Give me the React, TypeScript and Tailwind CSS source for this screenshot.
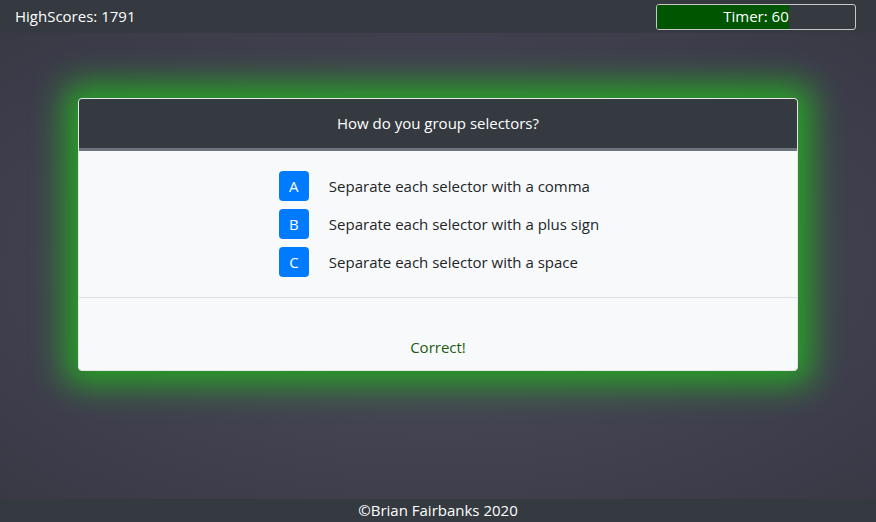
const options = [
  { key: "A", text: "Separate each selector with a comma" },
  { key: "B", text: "Separate each selector with a plus sign" },
  { key: "C", text: "Separate each selector with a space" },
];

export default function App() {
  return (
    <div className="flex h-[522px] w-[876px] flex-col overflow-hidden text-white font-['Open_Sans',sans-serif]">
      {/* Navbar */}
      <div className="flex h-[33px] shrink-0 items-center justify-between bg-[#343a40] pl-[15px] pr-[20px]">
        <span className="text-[15px] leading-none">HighScores: 1791</span>
        <div className="relative h-[26px] w-[200px] overflow-hidden rounded-[3px] border border-[#c8c8c8]">
          <div className="h-full w-[132px] bg-[#005500]" />
          <span className="absolute inset-0 flex items-center justify-center text-[15px]">
            Timer: 60
          </span>
        </div>
      </div>

      {/* Main */}
      <div className="flex flex-1 justify-center bg-[radial-gradient(ellipse_at_center,#4b4b59_0%,#444452_45%,#393946_100%)] pt-[65px]">
        <div className="h-fit w-[720px] overflow-hidden rounded-[4px] border border-[#e6e6e6] bg-[#f8f9fa] shadow-[0_0_32px_14px_#28a028]">
          <div className="flex h-[52px] items-center justify-center border-b-[3px] border-[#6c757d] bg-[#343a40] text-[15px]">
            How do you group selectors?
          </div>
          <div className="flex justify-center py-[20px] pl-[2px]">
            <div className="flex flex-col gap-[8px]">
              {options.map((o) => (
                <div key={o.key} className="flex items-center">
                  <button className="flex h-[30px] w-[30px] items-center justify-center rounded-[4px] bg-[#007bff] text-[15px] text-white">
                    {o.key}
                  </button>
                  <span className="ml-[20px] text-[15px] text-[#212529]">{o.text}</span>
                </div>
              ))}
            </div>
          </div>
          <div className="border-t border-[#dee2e6] pb-[11px] pt-[37px] text-center text-[15px] leading-[24px] text-[#1d5a12]">
            Correct!
          </div>
        </div>
      </div>

      {/* Footer */}
      <div className="flex h-[23px] shrink-0 items-center justify-center bg-[#343a40] text-[15px]">
        ©Brian Fairbanks 2020
      </div>
    </div>
  );
}
